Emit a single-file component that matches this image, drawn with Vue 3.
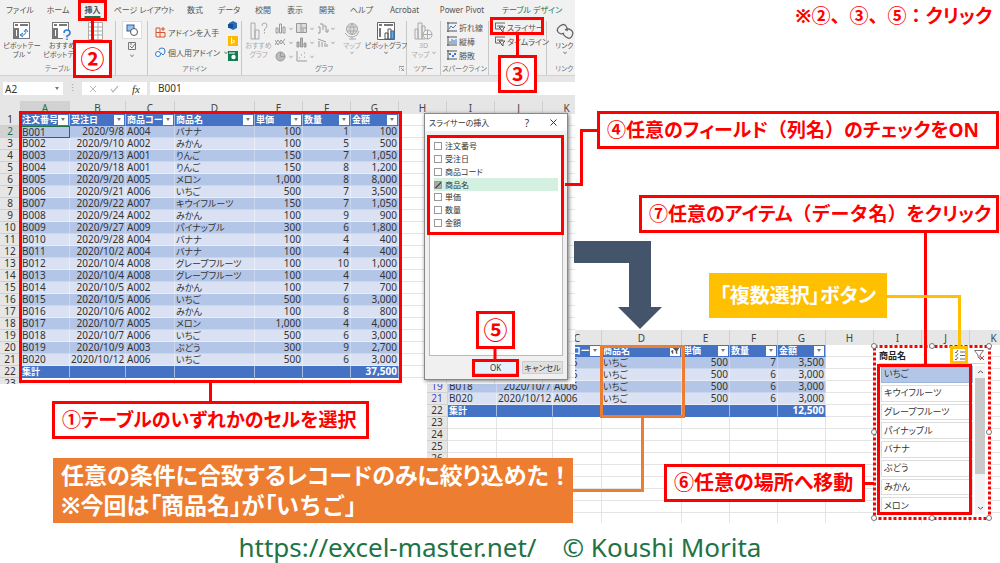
<script setup>
import { ref } from 'vue'

const tabs = ['ファイル', 'ホーム', '挿入', 'ページ レイアウト', '数式', 'データ', '校閲', '表示', '開発', 'ヘルプ', 'Acrobat', 'Power Pivot', 'テーブル デザイン']
const letters = ['A', 'B', 'C', 'D', 'E', 'F', 'G', 'H', 'I', 'J', 'K']
const fields = ['注文番号', '受注日', '商品コード', '商品名', '単価', '数量', '金額']
const checked = ref(['商品名'])
const products = ['いちご', 'キウイフルーツ', 'グレープフルーツ', 'パイナップル', 'バナナ', 'ぶどう', 'みかん', 'メロン']
const picked = ref('いちご')

const records = [
  ['B001', '2020/9/8', 'A004', 'バナナ', '100', '1', '100'],
  ['B002', '2020/9/10', 'A002', 'みかん', '100', '5', '500'],
  ['B003', '2020/9/13', 'A001', 'りんご', '150', '7', '1,050'],
  ['B004', '2020/9/18', 'A001', 'りんご', '150', '8', '1,200'],
  ['B005', '2020/9/20', 'A005', 'メロン', '1,000', '8', '8,000'],
  ['B006', '2020/9/21', 'A006', 'いちご', '500', '7', '3,500'],
  ['B007', '2020/9/22', 'A007', 'キウイフルーツ', '150', '7', '1,050'],
  ['B008', '2020/9/24', 'A002', 'みかん', '100', '9', '900'],
  ['B009', '2020/9/27', 'A009', 'パイナップル', '300', '6', '1,800'],
  ['B010', '2020/9/28', 'A004', 'バナナ', '100', '4', '400'],
  ['B011', '2020/10/2', 'A004', 'バナナ', '100', '4', '400'],
  ['B012', '2020/10/4', 'A008', 'グレープフルーツ', '100', '10', '1,000'],
  ['B013', '2020/10/4', 'A008', 'グレープフルーツ', '100', '4', '400'],
  ['B014', '2020/10/5', 'A002', 'みかん', '100', '7', '700'],
  ['B015', '2020/10/5', 'A006', 'いちご', '500', '6', '3,000'],
  ['B016', '2020/10/6', 'A002', 'みかん', '100', '8', '800'],
  ['B017', '2020/10/7', 'A005', 'メロン', '1,000', '4', '4,000'],
  ['B018', '2020/10/7', 'A006', 'いちご', '500', '6', '3,000'],
  ['B019', '2020/10/9', 'A003', 'ぶどう', '300', '9', '2,700'],
  ['B020', '2020/10/12', 'A006', 'いちご', '500', '6', '3,000'],
]
const numbered = records.map((cells, i) => ({ no: i + 2, cells }))
const sheets = [
  { key: 'filtered', rows: numbered.filter(r => r.cells[3] === 'いちご'), total: '12,500', blanks: [23, 24, 25, 26, '', '', '', '', ''], filtered: true },
  { key: 'full', rows: numbered, total: '37,500', blanks: [23], filtered: false },
]
</script>

<template>
  <main class="canvas">
    <section v-for="s in sheets" :key="s.key" class="shot" :class="s.key">
      <div v-if="!s.filtered" class="ribbon">
        <nav class="tabs">
          <button v-for="(t, i) in tabs" :key="t" :class="{ active: i === 2, design: i === 12 }">{{ t }}</button>
        </nav>
        <div class="groups">
          <div class="group">
            <div class="tools">
              <button class="tool w44">
                <svg width="18" height="18" viewBox="0 0 18 18"><rect x=".5" y=".5" width="16" height="16" fill="#fff" stroke="#777"/><path d="M2 3h3M7 3h8M2 7h3v8H2z" stroke="#777" stroke-width="2" fill="none"/><path d="M8 13q5 1 5-5M11 10l2-3 2 3M10 11l-3 2 3 2" fill="none" stroke="#2b7cd3"/></svg>
                <span>ピボットテー<br>ブル <b class="chev"></b></span>
              </button>
              <button class="tool w36">
                <svg width="20" height="18" viewBox="0 0 20 18"><rect x=".5" y=".5" width="16" height="16" fill="#fff" stroke="#777"/><path d="M2 3h3M7 3h8M2 7h3v8H2z" stroke="#777" stroke-width="2" fill="none"/><path d="M11 18v-9h9v9" fill="#f1f1f1"/><path d="M12 11q0-3 3-3t3 3q0 2-3 3v1.500M15 16.500v1.500" fill="none" stroke="#2b7cd3" stroke-width="1.500"/></svg>
                <span>おすすめ<br>ピボットテー</span>
              </button>
              <button class="tool w30" aria-label="テーブル">
                <svg width="15" height="18" viewBox="0 0 15 18"><path d="M.5.5h14v17H.5zM.5 5h14M.5 9h14M.5 13h14M5 1v16M10 1v16" fill="#fff" stroke="#aaa"/></svg>
              </button>
            </div>
            <div class="caption">テーブル</div>
          </div>
          <div class="group">
            <div class="tools stack">
              <span class="shapes"><svg width="12" height="12" viewBox="0 0 12 12"><rect x="1" y="1" width="7" height="6" fill="#9cc3ea" stroke="#2b5fa5"/><circle cx="8" cy="8" r="3.500" fill="#fff" stroke="#555"/></svg></span>
              <svg width="8" height="8" viewBox="0 0 8 8"><path d="M.5.5h7v7h-7zM2 4l2 2 3-4M2 2h2" fill="none" stroke="#777"/></svg>
              <b class="chev"></b>
            </div>
          </div>
          <div class="group">
            <div class="tools addins">
              <div class="col">
                <button class="line"><svg width="11" height="11" viewBox="0 0 11 11"><path d="M1 1h4v9H1zM1 5.500h9V10H5M8 0v4M6 2h4" fill="none" stroke="#d8532c"/></svg>アドインを入手</button>
                <button class="line"><svg width="11" height="11" viewBox="0 0 11 11"><path d="M4 3q0-2 3-2t3 3-2 4l-2-2" fill="none" stroke="#2b7cd3"/><circle cx="3" cy="7" r="2.500" fill="#fff" stroke="#2b7cd3"/></svg>個人用アドイン<b class="chev"></b></button>
              </div>
              <div class="brands">
                <svg width="10" height="10" viewBox="0 0 10 10"><path d="M1 2l4-2 4 2v5l-4 2-4-2z" fill="#2b6cb8"/><path d="M0 3h5v4H0z" fill="#174f91"/></svg>
                <svg width="10" height="10" viewBox="0 0 10 10"><path d="M0 0h10v10H0z" fill="#ffb900"/><path d="M3.500 1.500v6l3.500-2-2.500-1.500" fill="none" stroke="#fff"/></svg>
                <svg width="10" height="10" viewBox="0 0 10 10"><path d="M0 0h10v10H0z" fill="#107c52"/><circle cx="5.500" cy="6" r="2.200" fill="#fff"/><path d="M1 2h6" stroke="#fff"/></svg>
              </div>
            </div>
            <div class="caption">アドイン</div>
          </div>
          <div class="group">
            <div class="tools charts">
              <button class="tool faint w33">
                <svg width="18" height="18" viewBox="0 0 18 18"><path d="M1 1h4v16H1zM5 8h4v9H5z" fill="#eee" stroke="#aaa"/><path d="M12 4q0-3 2.500-3T17 4q0 1.500-2.500 3v2M14.500 10v1.500" fill="none" stroke="#aaa"/></svg>
                <span>おすすめ<br>グラフ</span>
              </button>
              <div class="minis">
                <span v-for="n in 8" :key="n"><svg width="12" height="11" viewBox="0 0 12 11" fill="none" stroke="#999">
                  <path v-if="n === 1" d="M1 5h2v5H1zM4.500 1h2v9h-2zM8 4h2v6H8z"/>
                  <path v-else-if="n === 2" d="M.5.500h10v9H.500zM5 1v8M5 5h5M7 6v4" fill="#ddd"/>
                  <path v-else-if="n === 3" d="M1 4h2v6H1M3 1h3v6M7 3h2v6h2V6"/>
                  <path v-else-if="n === 4" d="M0 8l3-5 3 4 4-5M0 3l3 5 3-5 4 5"/>
                  <path v-else-if="n === 5" d="M1 5h2v5H1zM4.500 1h2v9h-2zM8 6h2v4H8z" fill="#bbb"/>
                  <path v-else-if="n === 6" d="M1 2l8 3M2 4v6M5 5v5M8 6v4M10 7v3"/>
                  <g v-else-if="n === 7"><circle cx="5.500" cy="5.500" r="4.500" fill="#bbb"/><path d="M5.500 1v4.500H10"/></g>
                  <path v-else d="M1 0v10h10M3 7h1M5 4h1M8 6h1M8 2h1"/>
                </svg><b class="chev"></b></span>
              </div>
              <button class="tool faint w28">
                <svg width="18" height="18" viewBox="0 0 18 18" fill="none" stroke="#aaa"><circle cx="9" cy="7" r="5.500" fill="#ddd"/><path d="M4 5h10M4 9h10M9 2q-4 5 0 11M9 2q4 5 0 11M2 11q3 5 8 4t6-6M9 15v2M6 17h7"/></svg>
                <span>マップ<br><b class="chev"></b></span>
              </button>
              <button class="tool w40">
                <svg width="19" height="18" viewBox="0 0 19 18"><path d="M.5.500h17v17H.500z" fill="#fff" stroke="#666"/><path d="M2 3h3M7 3h9M3 6v9" stroke="#777" stroke-width="2"/><path d="M8 11h3v6H8zM11 7h3v10h-3z" fill="#fff" stroke="#555"/><path d="M14 9h3v8h-3z" fill="#69a6df" stroke="#2b6cb8"/></svg>
                <span>ピボットグラフ<br><b class="chev"></b></span>
              </button>
            </div>
            <div class="caption">グラフ<svg class="launch" width="5" height="5" viewBox="0 0 5 5"><path d="M0 5V.500h5M2 2l3 3M5 2v3H2" fill="none" stroke="#999"/></svg></div>
          </div>
          <div class="group">
            <div class="tools">
              <button class="tool faint w33">
                <svg width="19" height="18" viewBox="0 0 19 18" fill="none" stroke="#aaa"><path d="M1 7h3v10H1zM4 1h4v16H4zM8 4h3v13H8z" fill="#eee"/><circle cx="13.500" cy="12.500" r="4.500" fill="#f1f1f1"/><path d="M9 12.500h9M13.500 8v9"/></svg>
                <span>3D<br>マップ <b class="chev"></b></span>
              </button>
            </div>
            <div class="caption">ツアー</div>
          </div>
          <div class="group">
            <div class="tools col lines">
              <button v-for="(t, i) in ['折れ線', '縦棒', '勝敗']" :key="t" class="line">
                <svg width="10" height="10" viewBox="0 0 10 10"><path d="M0 1h10M0 9h10M1 0v10" stroke="#555"/><path v-if="i === 0" d="M2 7l2-3 2 2 3-3" fill="none" stroke="#2b7cd3"/><path v-else-if="i === 1" d="M3 8V5M5 8V3M7 8V4M9 8V3" stroke="#2b7cd3"/><path v-else d="M2 4h2M5 6h2M7 4h2" stroke="#2b7cd3" stroke-width="2"/></svg>{{ t }}
              </button>
            </div>
            <div class="caption">スパークライン</div>
          </div>
          <div class="group">
            <div class="tools col lines">
              <button v-for="t in ['スライサー', 'タイムライン']" :key="t" class="line">
                <svg width="10" height="10" viewBox="0 0 10 10"><path d="M0 1h10M.500 1v6H5M2 4h6" fill="none" stroke="#666"/><path d="M4 5h6L8 7v3L6 8V7z" fill="#fff" stroke="#555"/></svg>{{ t }}
              </button>
            </div>
          </div>
          <div class="group">
            <div class="tools">
              <button class="tool w36">
                <svg width="18" height="18" viewBox="0 0 18 18"><path d="M8 11q-4 2-6-1t2-6 6 0 1 5M9 8q3-2 6 0t1 6-6 1-2-4" fill="none" stroke="#666" stroke-width="1.300"/></svg>
                <span>リンク<br><b class="chev"></b></span>
              </button>
            </div>
            <div class="caption">リンク</div>
          </div>
        </div>
      </div>

      <div v-if="!s.filtered" class="formula">
        <button class="name">A2<i class="tri"></i></button>
        <span class="dots">⋮</span>
        <span class="fx">
          <svg width="8" height="8" viewBox="0 0 8 8"><path d="M1 1l6 6M7 1L1 7" stroke="#bbb"/></svg>
          <svg width="9" height="8" viewBox="0 0 9 8"><path d="M1 4l2 3 5-6" fill="none" stroke="#bbb" stroke-width="1.300"/></svg>
          <em>fx</em>
        </span>
        <input class="value" value="B001" aria-label="数式バー">
      </div>

      <table class="sheet">
        <colgroup><col class="c-no"><col v-for="l in letters" :key="l" :class="'c-' + l"></colgroup>
        <thead>
          <tr class="letters"><th class="corner"></th><th v-for="l in letters" :key="l" :class="{ current: l === 'A' && !s.filtered }">{{ l }}</th></tr>
        </thead>
        <tbody>
          <tr class="heads">
            <th class="no">1</th>
            <th v-for="(f, i) in fields" :key="f" class="fill"><div><span>{{ f }}</span><button :aria-label="f + 'のフィルター'">
              <svg v-if="s.filtered && i === 3" width="8" height="8" viewBox="0 0 8 8"><path d="M2 1h6L6 4v3L5 6V4zM0 4l2 3V3" fill="#555" stroke="#555" stroke-width=".500"/></svg>
              <i v-else class="tri"></i>
            </button></div></th>
            <td v-for="n in 4" :key="n"></td>
          </tr>
          <tr v-for="(r, i) in s.rows" :key="r.no" :class="i % 2 ? 'light' : 'deep'">
            <th class="no" :class="{ blue: s.filtered, current: r.no === 2 }">{{ r.no }}</th>
            <td v-for="(c, j) in r.cells" :key="j" class="data" :class="{ num: j === 1 || j > 3, cursor: r.no === 2 && j === 0 }">{{ c }}</td>
            <td v-for="n in 4" :key="'e' + n"></td>
          </tr>
          <tr class="total">
            <th class="no">22</th>
            <td class="fill">集計</td><td v-for="n in 5" :key="n" class="fill"></td><td class="fill num">{{ s.total }}</td>
            <td v-for="n in 4" :key="'e' + n"></td>
          </tr>
          <tr v-for="(b, i) in s.blanks" :key="i"><th class="no">{{ b }}</th><td v-for="n in 11" :key="n"></td></tr>
        </tbody>
      </table>
    </section>

    <section class="dialog" role="dialog" aria-label="スライサーの挿入">
      <header><span>スライサーの挿入</span><button>?</button><button aria-label="閉じる"><svg width="7" height="7" viewBox="0 0 7 7"><path d="M.5.500l6 6M6.500.500l-6 6" stroke="#333"/></svg></button></header>
      <div class="list">
        <div class="options">
          <label v-for="f in fields" :key="f" :class="{ on: checked.includes(f) }"><input v-model="checked" type="checkbox" :value="f">{{ f }}</label>
        </div>
      </div>
      <footer><button class="ok">OK</button><button>キャンセル</button></footer>
    </section>

    <section class="slicer">
      <header><strong>商品名</strong>
        <button aria-label="複数選択"><svg width="11" height="11" viewBox="0 0 11 11"><path d="M5 2h6M5 5.500h6M5 9h6M0 2l1 1 2-3M0 5.500l1 1 2-3M0 9l1 1 2-3" fill="none" stroke="#666"/></svg></button>
        <button aria-label="フィルターのクリア"><svg width="11" height="11" viewBox="0 0 11 11"><path d="M.5.500h9L6 5v4L4 7V5z" fill="none" stroke="#777"/><path d="M6 6l4 4M10 6l-4 4" stroke="#e03c31"/></svg></button>
      </header>
      <div class="body">
        <div class="items"><button v-for="p in products" :key="p" :class="{ on: picked === p }" @click="picked = p">{{ p }}</button></div>
        <div class="scroll"><svg width="7" height="4" viewBox="0 0 7 4"><path d="M1 3l2.500-2L6 3" fill="none" stroke="#555"/></svg><div class="thumb"></div><svg width="7" height="4" viewBox="0 0 7 4"><path d="M1 1l2.500 2L6 1" fill="none" stroke="#555"/></svg></div>
      </div>
    </section>

    <svg class="wires" width="1000" height="563" viewBox="0 0 1000 563" fill="none" aria-hidden="true">
      <path d="M574 241H651V307H662L640 329L618 307H629V263H574Z" fill="#44546a"/>
      <g stroke="#f00" stroke-width="3">
        <path d="M92.500 20V42M517.500 34V56M495 348V360M210.500 382V402M565 184.500H581.500V130.500H598M864 483.500H874"/>
        <rect x="79.500" y="1.500" width="26" height="18"/>
        <rect x="491.500" y="18.500" width="51" height="15"/>
        <rect x="20.500" y="112.500" width="380" height="269"/>
        <rect x="428.500" y="136.500" width="134" height="97"/>
        <rect x="473.500" y="360.500" width="44" height="15"/>
        <rect x="878.500" y="365.500" width="92" height="148"/>
        <rect x="874.500" y="346.500" width="115" height="172" stroke-dasharray="3 2"/>
      </g>
      <g stroke="#777" fill="#fff"><circle cx="874" cy="346" r="2.500"/><circle cx="932" cy="346" r="2.500"/><circle cx="989" cy="346" r="2.500"/><circle cx="874" cy="432" r="2.500"/><circle cx="989" cy="432" r="2.500"/><circle cx="874" cy="518" r="2.500"/><circle cx="932" cy="518" r="2.500"/><circle cx="989" cy="518" r="2.500"/></g>
      <path d="M925.500 232V366" stroke="#f00" stroke-width="3"/>
      <g stroke="#ffc000" stroke-width="3"><path d="M886 296.500H959.500V347"/><rect x="951.500" y="347.500" width="15" height="15"/></g>
      <g stroke="#ed7d31" stroke-width="3"><path d="M572 490.500H642.500V418"/><rect x="601.500" y="346.500" width="82" height="70"/></g>
    </svg>

    <p class="note hint">※②<span>、</span>③<span>、</span>⑤<span>：</span>クリック</p>
    <p class="note box badge n2">②</p>
    <p class="note box badge n3">③</p>
    <p class="note box badge n5">⑤</p>
    <p class="note box n1">①テーブルのいずれかのセルを選択</p>
    <p class="note box n4">④任意のフィールド<span>（列名）</span>のチェックをON</p>
    <p class="note box n7">⑦任意のアイテム<span>（データ名）</span>をクリック</p>
    <p class="note box n6">⑥任意の場所へ移動</p>
    <p class="note yellow">「複数選択」ボタン</p>
    <p class="note orange">任意の条件に合致するレコードのみに絞り込めた<span>！</span><br>※今回<span>は</span>「商品名」<span>が</span>「<span>いちご</span>」</p>
    <p class="credit"><a href="https://excel-master.net/">https://excel-master.net/</a><span>© Koushi Morita</span></p>
  </main>
</template>

<style>
body { margin: 0; background: #fff; }
</style>

<style scoped>
* { box-sizing: border-box; }
.canvas { position: relative; width: 100%; min-height: 100vh; overflow: hidden; background: #fff; color: #333; font: 9px/12px "Noto Sans", "Noto Sans CJK JP", sans-serif; font-feature-settings: "palt"; white-space: nowrap; }
button { font: inherit; font-feature-settings: inherit; color: inherit; border: 0; padding: 0; margin: 0; background: none; white-space: nowrap; }
svg { display: block; flex: none; }
p { margin: 0; }

.shot { position: absolute; overflow: hidden; background: #fff; }
.full { left: 0; top: 0; width: 575px; height: 384px; }
.filtered { left: 427px; right: 0; top: 330px; height: 193px; }

.ribbon { height: 76px; background: #f1f1f1; border-bottom: 1px solid #d2d2d2; font-size: 8px; line-height: 9px; color: #555; }
.tabs { display: grid; grid-template-columns: 40px 36px 33px 70px 32px 36px 32px 32px 32px 37px 49px 66px 74px; height: 18px; }
.tabs button { display: flex; justify-content: center; align-items: center; }
.tabs .active { font-weight: bold; text-decoration: underline 2px #217346; text-underline-offset: 3px; }
.tabs .design { color: #217346; }
.groups { display: grid; grid-template-columns: 116px 32px 94px 165px 34px 48px 58px 36px; height: 57px; padding-top: 3px; }
.group { display: flex; flex-direction: column; justify-content: space-between; border-right: 1px solid #c8c8c8; font-size: 7px; }
.tools { display: flex; height: 42px; }
.tool { display: flex; flex-direction: column; align-items: center; gap: 1px; height: 40px; padding-top: 1px; }
.tool span { text-align: center; }
.faint { color: #aaa; }
.w44 { width: 44px; } .w36 { width: 36px; } .w40 { width: 40px; } .w33 { width: 33px; } .w30 { width: 30px; } .w28 { width: 28px; }
.caption { position: relative; text-align: center; color: #777; height: 11px; }
.launch { position: absolute; right: 2px; top: 2px; }
.chev { display: inline-block; width: 4px; height: 4px; border: solid #777; border-width: 0 1px 1px 0; transform: rotate(45deg) scale(.7); vertical-align: 3px; }
.stack { flex-direction: column; align-items: center; gap: 3px; }
.shapes { display: grid; place-items: center; width: 20px; height: 18px; background: #fff; border: 1px solid #ddd; flex: none; }
.col { display: flex; flex-direction: column; }
.addins { justify-content: space-between; padding: 0 6px 0 7px; }
.addins .col { gap: 8px; padding-top: 5px; }
.line { display: flex; align-items: center; gap: 2px; height: 12px; font-size: 8px; }
.addins .line { font-size: 8px; }
.line .chev { margin-left: 2px; }
.brands { display: flex; flex-direction: column; justify-content: space-between; height: 40px; }
.lines { gap: 2px; padding-left: 6px; }
.charts .minis { display: grid; grid-template-columns: repeat(3, 21px); grid-auto-rows: 14px; width: 63px; }
.minis span { display: flex; align-items: center; gap: 2px; }
.minis .chev, .faint .chev { border-color: #aaa; }

.formula { display: flex; align-items: stretch; height: 25px; padding: 6px 0 6px 3px; background: #e6e6e6; }
.name { display: flex; justify-content: space-between; align-items: center; width: 60px; padding: 0 4px 0 2px; background: #fff; font-size: 10px; }
.tri { display: block; border: solid transparent; border-width: 3px 2px 0; border-top-color: #777; }
.dots { width: 19px; text-align: center; color: #999; }
.fx { display: flex; align-items: center; justify-content: space-between; width: 65px; padding: 0 7px; background: #fff; }
.fx em { font: italic 11px "Liberation Serif", serif; }
.value { flex: 1; min-width: 0; margin-left: 3px; border: 0; padding: 0 8px; background: #fff; color: #333; font: 10px/13px "Noto Sans", sans-serif; }

.sheet { table-layout: fixed; width: 580px; border-spacing: 0; font-size: 10px; line-height: 11px; }
.c-no { width: 21px; } .c-A { width: 49px; } .c-B { width: 56px; } .c-C { width: 49px; } .c-D { width: 80px; }
.c-E, .c-F, .c-G, .c-H, .c-I, .c-J, .c-K { width: 48px; }
.sheet th, .sheet td { height: 12px; padding: 0 1px; border: solid #e4e4e4; border-width: 0 1px 1px 0; }
.sheet .letters th { height: 13px; line-height: 12px; background: #e6e6e6; border-color: #cfcfcf; border-bottom: 0; font-weight: normal; color: #444; }
.filtered .letters th { height: 15px; line-height: 14px; }
.sheet .no { background: #e6e6e6; border-color: #d0d0d0; font-weight: normal; text-align: center; }
.sheet .letters .current, .sheet .current { background: #d2d2d2; color: #217346; }
.sheet .blue { color: #4040d8; }
.sheet .fill { background: #4472c4; color: #fff; font-weight: bold; border-color: #a5bbe4; border-bottom-color: #4472c4; }
.heads .fill div { display: flex; align-items: center; justify-content: space-between; height: 11px; font-size: 9px; text-align: left; }
.heads span { min-width: 0; }
.heads button { display: grid; place-items: center; width: 10px; height: 10px; background: #fff; flex: none; position: relative; }
.deep .data { background: #b4c6e7; border-color: #c9d6ee; }
.light .data { background: #d9e1f2; border-color: #e8edf7; }
.data:nth-child(5) { font-size: 9px; }
.total td:nth-child(2) { font-size: 9px; }
.num { text-align: right; }
.sheet .cursor { border: 1px solid #217346; padding: 0; line-height: 10px; }

.dialog { position: absolute; left: 424px; top: 113px; width: 144px; height: 267px; display: flex; flex-direction: column; background: #f0f0f0; border: 1px solid #888; box-shadow: 1px 1px 4px #777; font-size: 8px; }
.dialog header { display: flex; align-items: center; height: 17px; padding: 0 7px 0 4px; background: #fff; }
.dialog header span { flex: 1; }
.dialog header button { width: 14px; margin-left: 12px; font-size: 10px; display: grid; place-items: center; }
.list { flex: 1; margin: 5px 4px 0; background: #fff; border: 1px solid #bbb; }
.options { display: flex; flex-direction: column; height: 89px; margin: 3px 4px; }
.options label { flex: 1; display: flex; align-items: center; gap: 3px; }
.options .on { background: #d3f0e0; }
.options input { appearance: none; width: 8px; height: 8px; margin: 0; border: 1px solid #999; background: #fff; }
.options input:checked { background: #aaa linear-gradient(135deg, transparent 45%, #555 45% 60%, transparent 60%); }
.dialog footer { display: flex; justify-content: flex-end; gap: 5px; padding: 5px 4px; }
.dialog footer button { width: 41px; height: 13px; border: 1px solid #ccc; background: #e1e1e1; line-height: 11px; }
.dialog footer .ok { width: 43px; background: #e5f1fb; }

.slicer { position: absolute; left: 874px; top: 346px; width: 116px; height: 173px; display: flex; flex-direction: column; padding: 2px 5px 5px; background: #fff; font-size: 9px; }
.slicer header { display: flex; align-items: center; height: 16px; gap: 8px; border-bottom: 1px solid #c5d4ea; }
.slicer strong { flex: 1; color: #222; }
.body { flex: 1; min-height: 0; display: flex; gap: 2px; padding-top: 2px; }
.items { flex: 1; display: flex; flex-direction: column; gap: 2px; border-left: 2px solid #fff; }
.items button { flex: 1; padding-left: 2px; text-align: left; border: 1px solid #ddd; }
.items .on { background: #b4c6e7; border-color: #9db4dd; }
.scroll { width: 10px; display: flex; flex-direction: column; align-items: center; padding: 4px 0; gap: 4px; background: #f3f3f3; }
.thumb { width: 10px; height: 96px; background: #c9c9c9; margin-bottom: auto; }

.wires { position: absolute; left: 0; top: 0; }
.note { position: absolute; font-size: 19px; line-height: 32px; font-weight: bold; color: #f00; }
.note span { font-feature-settings: "palt" 0; }
.box { border: 3px solid #f00; background: #fff; padding: 0 7px; }
.hint { right: 8px; top: 0; }
.box.badge { width: 39px; padding: 0; font-size: 24px; text-align: center; }
.n2 { left: 73px; top: 40px; }
.n3 { left: 498px; top: 55px; }
.n5 { left: 476px; top: 311px; }
.n1 { left: 52px; top: 401px; width: 317px; }
.n4 { left: 597px; top: 111px; width: 402px; }
.n7 { left: 639px; top: 195px; width: 360px; }
.n6 { left: 664px; top: 464px; width: 201px; font-size: 20px; }
.yellow { left: 709px; top: 273px; width: 178px; font-size: 20px; line-height: 45px; background: #ffc000; color: #fff; text-align: center; }
.orange { left: 53px; top: 458px; width: 520px; padding: 2px 8px; font-size: 23px; line-height: 30px; background: #ed7d31; color: #fff; height: 65px; }
.credit { position: absolute; left: 0; right: 0; top: 531px; display: flex; justify-content: center; gap: 26px; font-size: 26px; line-height: 32px; color: #217346; }
.credit a { color: inherit; text-decoration: none; }
</style>
